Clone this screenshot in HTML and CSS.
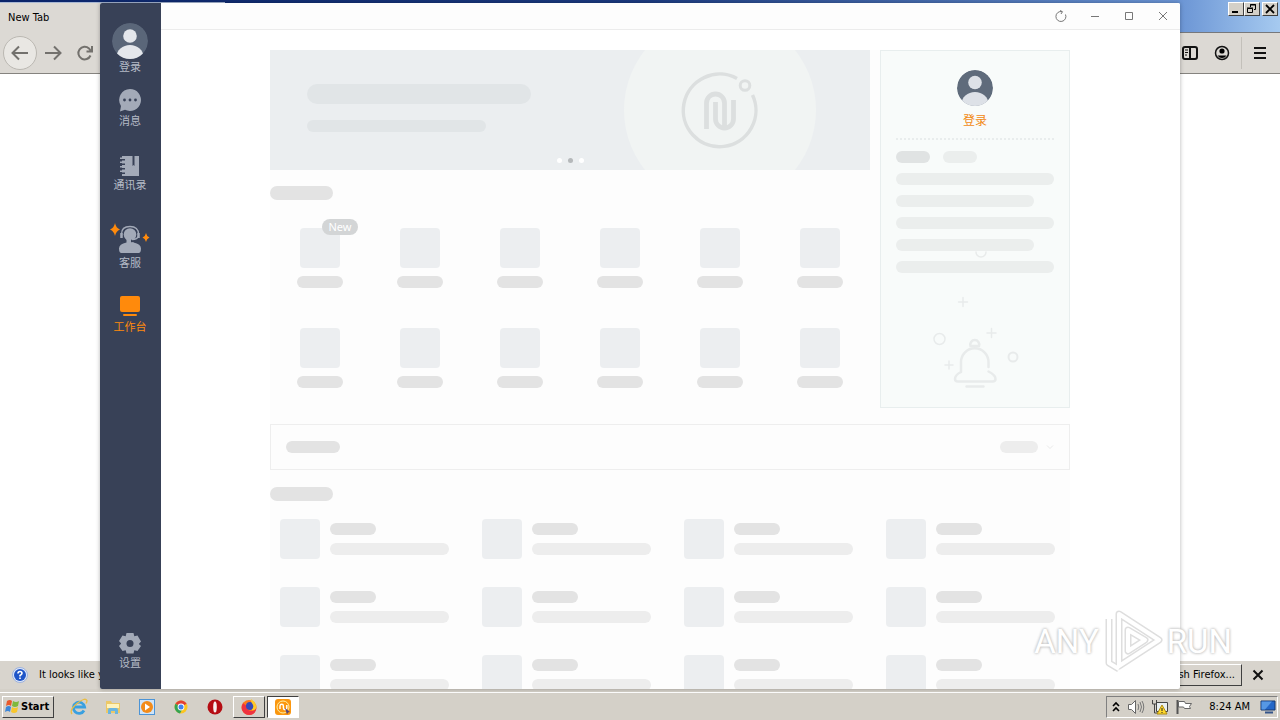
FILE: index.html
```html
<!DOCTYPE html>
<html lang="zh-CN">
    <head>
        <meta charset="UTF-8">
        <meta name="viewport" content="width=device-width,initial-scale=1.0">
        <title>工作台</title>
        <link rel="stylesheet" href="styles.css">
    </head>
    <body>
        <main class="desktop">
            <!-- browser in the background -->
            <section class="browser">
                <div class="browser-title">
                    <div class="tab">New Tab</div>
                    <div class="win-buttons">
                        <button class="win-btn" aria-label="Minimize"><svg width="12" height="10" viewBox="0 0 12 10"><path d="M2 8h6" stroke="#000" stroke-width="2"/></svg></button>
                        <button class="win-btn" aria-label="Restore"><svg width="12" height="10" viewBox="0 0 12 10"><path d="M4.500 3V.5h5v5H8M4 1h6M1.500 4.500h5v4h-5zM1 4h6" fill="none" stroke="#000"/></svg></button>
                        <button class="win-btn win-close" aria-label="Close"><svg width="12" height="10" viewBox="0 0 12 10"><path d="M2 1l8 8M10 1l-8 8" stroke="#000" stroke-width="1.800"/></svg></button>
                    </div>
                </div>
                <div class="toolbar">
                    <button class="tool back" aria-label="Back"><svg width="18" height="18" viewBox="0 0 18 18"><path d="M17 9H2M8 2.500L1.500 9 8 15.500"/></svg></button>
                    <button class="tool" aria-label="Forward"><svg width="18" height="18" viewBox="0 0 18 18"><path d="M1 9h15M10 2.500L16.500 9 10 15.500"/></svg></button>
                    <button class="tool" aria-label="Reload"><svg width="18" height="18" viewBox="0 0 18 18"><path d="M14.500 11.500A6.300 6.300 0 1 1 13 4.500l2 2.500M16 2v5.500h-5.500"/></svg></button>
                    <span class="spacer"></span>
                    <button class="tool dark" aria-label="Sidebar"><svg width="18" height="16" viewBox="0 0 18 16"><rect x="2" y="2" width="14" height="12" rx="2"/><path d="M9 2v12"/><path d="M4 5h3M4 7.500h3M4 10h2" stroke-width="1"/></svg></button>
                    <button class="tool dark" aria-label="Account"><svg width="16" height="16" viewBox="0 0 16 16"><circle cx="8" cy="8" r="6.500" stroke-width="1.500"/><circle cx="8" cy="6" r="2.600" fill="#000" stroke="none"/><path d="M3.500 10.500h9Q11 13 8 13t-4.500-2.500z" fill="#000" stroke="none"/></svg></button>
                    <button class="tool dark menu" aria-label="Menu"><svg width="14" height="14" viewBox="0 0 14 14"><path d="M1 2h12M1 7h12M1 12h12"/></svg></button>
                </div>
                <div class="page"></div>
                <div class="notice">
                    <svg width="16" height="16" viewBox="0 0 16 16"><circle cx="8" cy="8" r="7.500" fill="#dfe8fa" stroke="#9eb2dc"/><circle cx="8" cy="8" r="6" fill="#1f55c8"/><path d="M6 6.500Q6 4.500 8 4.500t2 1.800Q10 7.300 8 8.500v1M8 10.500v1.500" stroke="#fff" stroke-width="1.600" fill="none"/></svg>
                    <span>It looks like y</span>
                    <span class="spacer"></span>
                    <button class="refresh">Refresh Firefox...</button>
                    <button class="tool dark" aria-label="Dismiss"><svg width="12" height="12" viewBox="0 0 12 12"><path d="M1.500 1.500l9 9M10.500 1.500l-9 9"/></svg></button>
                </div>
            </section>

            <!-- app window -->
            <section class="app">
                <nav class="sidebar">
                    <button class="nav-item user">
                        <svg width="36" height="36" viewBox="0 0 36 36"><defs><clipPath id="round"><circle cx="18" cy="18" r="18"/></clipPath></defs><g clip-path="url(#round)"><circle cx="18" cy="18" r="18" fill="#5a6679"/><circle cx="18" cy="13" r="6.800" fill="#e4e7ec"/><ellipse cx="18" cy="34" rx="13.500" ry="12" fill="#e4e7ec"/></g></svg>
                        登录
                    </button>
                    <button class="nav-item">
                        <svg width="24" height="24" viewBox="0 0 24 24"><path d="M12 0a11 11 0 1 1-5 20.800L2 22.500l1-5.500A11 11 0 0 1 12 0z" fill="#a3aab8"/><g fill="#384157"><circle cx="6.500" cy="11" r="1.400"/><circle cx="12" cy="11" r="1.400"/><circle cx="17.500" cy="11" r="1.400"/></g></svg>
                        消息
                    </button>
                    <button class="nav-item">
                        <svg width="24" height="24" viewBox="0 0 24 24"><path d="M4 3h17v20H4z" fill="#a3aab8"/><path d="M14.500 3h2v10l-1-1-1 1zM3 6h4v1.500H3zM3 10.500h4V12H3zM3 15h4v1.500H3zM3 19.500h4V21H3z" fill="#384157"/><path d="M2 4.500h3V6H2zM2 8.500h3V10H2zM2 13h3v1.500H2zM2 17.500h3V19H2z" fill="#a3aab8"/></svg>
                        通讯录
                    </button>
                    <button class="nav-item">
                        <svg width="40" height="38" viewBox="0 0 40 38"><circle cx="20" cy="17.500" r="6.300" fill="#a3aab8"/><path d="M16.500 22h7v3.500q7.500 1.500 7.500 6 0 4.500-2.500 4.500h-17Q9 36 9 31.500q0-4.500 7.500-6z" fill="#a3aab8"/><path d="M28.500 21q-2 3-7.500 3" fill="none" stroke="#384157" stroke-width="2.500"/><path d="M11.500 19v-2q0-7.500 8.500-7.500t8.500 7.500v2q-1 3.500-6.500 3.500" fill="none" stroke="#a3aab8" stroke-width="1.300"/><path d="M11.500 16v5M28.500 16v5" stroke="#a3aab8" stroke-width="2.500"/><path d="M5 6q1 5 5 6.500Q6 14 5 19 4 14 0 12.500 4 11 5 6zM36 16q.6 3.500 3.500 4.500-2.900 1-3.500 4.500-.6-3.500-3.500-4.500 2.900-1 3.500-4.500z" fill="#ff8a0c"/></svg>
                        客服
                    </button>
                    <button class="nav-item active">
                        <svg width="24" height="24" viewBox="0 0 24 24"><rect x="2" y="1" width="20" height="16" rx="2" fill="#ff8a0c"/><rect x="5" y="19" width="14" height="2" rx="1" fill="#ff8a0c"/></svg>
                        工作台
                    </button>
                    <button class="nav-item settings">
                        <svg width="24" height="24" viewBox="0 0 24 24"><path d="M8.500 2h7l.8 3.200 3.200-.8L23 10.500 20.800 13 23 15l-3.500 5-3.200-.8-.8 3.300h-7l-.8-3.300-3.200.8L1 15l2.200-2.500L1 10l3.500-5.600 3.200.8z" fill="#a3aab8"/><circle cx="12" cy="12.500" r="3.500" fill="#384157"/></svg>
                        设置
                    </button>
                </nav>

                <div class="main">
                    <header class="titlebar">
                        <button aria-label="刷新"><svg width="12" height="12" viewBox="0 0 12 12"><path d="M10.500 4.500A5 5 0 1 1 7 1.600M5 .5l2.500 1.200L6 4"/></svg></button>
                        <button aria-label="最小化"><svg width="12" height="12" viewBox="0 0 12 12"><path d="M2 6.500h8"/></svg></button>
                        <button aria-label="最大化"><svg width="12" height="12" viewBox="0 0 12 12"><path d="M2.500 2.500h7v7h-7z"/></svg></button>
                        <button aria-label="关闭"><svg width="12" height="12" viewBox="0 0 12 12"><path d="M2 2l8 8M10 2l-8 8"/></svg></button>
                    </header>

                    <div class="content">
                        <div class="column">
                            <div class="top">
                                <div class="left">
                                    <div class="banner">
                                        <svg class="banner-art" width="192" height="120" viewBox="0 0 192 120">
                                            <circle cx="96" cy="60" r="96" fill="#f1f4f3"/>
                                            <g fill="none" stroke="#dcdfdf">
                                                <path d="M113 28.500A36.300 36.300 0 1 0 128.500 45" stroke-width="3.500"/>
                                                <circle cx="121" cy="35.500" r="4.800" stroke-width="3"/>
                                                <path d="M82.500 80V54a9 9 0 0 1 18 0v26M91.500 53v17a9 9 0 0 0 18 0V51" stroke-width="4.800" transform="translate(0 -1)"/>
                                            </g>
                                        </svg>
                                        <div class="bar banner-big"></div>
                                        <div class="bar banner-small"></div>
                                        <div class="dots"><i></i><i class="on"></i><i></i></div>
                                    </div>
                                    <div class="bar heading"></div>
                                    <div class="apps">
                                        <div class="app-cell"><span class="badge">New</span><div class="tile"></div><div class="bar name"></div></div>
                                        <div class="app-cell"><div class="tile"></div><div class="bar name"></div></div>
                                        <div class="app-cell"><div class="tile"></div><div class="bar name"></div></div>
                                        <div class="app-cell"><div class="tile"></div><div class="bar name"></div></div>
                                        <div class="app-cell"><div class="tile"></div><div class="bar name"></div></div>
                                        <div class="app-cell"><div class="tile"></div><div class="bar name"></div></div>
                                        <div class="app-cell"><div class="tile"></div><div class="bar name"></div></div>
                                        <div class="app-cell"><div class="tile"></div><div class="bar name"></div></div>
                                        <div class="app-cell"><div class="tile"></div><div class="bar name"></div></div>
                                        <div class="app-cell"><div class="tile"></div><div class="bar name"></div></div>
                                        <div class="app-cell"><div class="tile"></div><div class="bar name"></div></div>
                                        <div class="app-cell"><div class="tile"></div><div class="bar name"></div></div>
                                    </div>
                                </div>

                                <aside class="panel">
                                    <svg class="avatar" width="36" height="36" viewBox="0 0 36 36"><g clip-path="url(#round)"><circle cx="18" cy="18" r="18" fill="#5f6b7b"/><circle cx="18" cy="12.500" r="6.800" fill="#dde1e7"/><ellipse cx="18" cy="34" rx="13.500" ry="12" fill="#dde1e7"/></g></svg>
                                    <a class="login" href="#">登录</a>
                                    <div class="rule"></div>
                                    <div class="pills"><div class="bar pill"></div><div class="bar pill light"></div></div>
                                    <div class="lines">
                                        <div class="bar light"></div>
                                        <div class="bar light short"></div>
                                        <div class="bar light"></div>
                                        <div class="bar light short"></div>
                                        <div class="bar light"></div>
                                    </div>
                                    <svg class="bell" width="90" height="150" viewBox="0 0 90 150">
                                        <g fill="none" stroke="#e8ebeb" stroke-width="2.500" stroke-linecap="round">
                                            <path d="M40.500 100a4.500 4.500 0 1 1 8.500 0z"/>
                                            <path d="M31 126v-10a13.500 13.500 0 0 1 27.500 0v5M31 126q-6 3-6 7 0 2.500 3 2.500h34.500q3 0 3-2.500 0-4-7-7.500M36.500 140.500h17"/>
                                            <g stroke-width="1.500">
                                                <circle cx="9.500" cy="93" r="5.500"/>
                                                <circle cx="83" cy="111" r="4.500" stroke-width="2"/>
                                                <path d="M46 6a5 5 0 0 0 10 0"/>
                                                <path d="M28.500 56h9M33 51.500v9M57 87h9M61.500 82.500v9M15 119h8M19 115v8"/>
                                            </g>
                                        </g>
                                    </svg>
                                </aside>
                            </div>

                            <div class="filter">
                                <div class="bar filter-name"></div>
                                <div class="filter-more">
                                    <div class="bar light filter-pill"></div>
                                    <svg width="8" height="6" viewBox="0 0 8 6"><path d="M1 1.500l3 3 3-3" fill="none" stroke="#eaeaea"/></svg>
                                </div>
                            </div>

                            <div class="bar heading"></div>
                            <div class="cards">
                                <div class="card"><div class="tile"></div><div class="card-text"><div class="bar name"></div><div class="bar light desc"></div></div></div>
                                <div class="card"><div class="tile"></div><div class="card-text"><div class="bar name"></div><div class="bar light desc"></div></div></div>
                                <div class="card"><div class="tile"></div><div class="card-text"><div class="bar name"></div><div class="bar light desc"></div></div></div>
                                <div class="card"><div class="tile"></div><div class="card-text"><div class="bar name"></div><div class="bar light desc"></div></div></div>
                                <div class="card"><div class="tile"></div><div class="card-text"><div class="bar name"></div><div class="bar light desc"></div></div></div>
                                <div class="card"><div class="tile"></div><div class="card-text"><div class="bar name"></div><div class="bar light desc"></div></div></div>
                                <div class="card"><div class="tile"></div><div class="card-text"><div class="bar name"></div><div class="bar light desc"></div></div></div>
                                <div class="card"><div class="tile"></div><div class="card-text"><div class="bar name"></div><div class="bar light desc"></div></div></div>
                                <div class="card"><div class="tile"></div><div class="card-text"><div class="bar name"></div><div class="bar light desc"></div></div></div>
                                <div class="card"><div class="tile"></div><div class="card-text"><div class="bar name"></div><div class="bar light desc"></div></div></div>
                                <div class="card"><div class="tile"></div><div class="card-text"><div class="bar name"></div><div class="bar light desc"></div></div></div>
                                <div class="card"><div class="tile"></div><div class="card-text"><div class="bar name"></div><div class="bar light desc"></div></div></div>
                            </div>
                        </div>
                    </div>
                </div>
            </section>

            <div class="watermark">
                <span>ANY</span>
                <svg width="60" height="64" viewBox="0 0 60 64"><g fill="none" stroke-linejoin="round"><g stroke="#dedede" stroke-width="7"><path d="M16 5l40 26-40 26z"/><path d="M25 21l17 10-17 11zM6 10v44l10 6"/></g><g stroke="#fff" stroke-width="4"><path d="M16 5l40 26-40 26z"/><path d="M25 21l17 10-17 11zM6 10v44l10 6"/></g></g></svg>
                <span>RUN</span>
            </div>
        </main>

        <footer class="taskbar">
            <button class="start">
                <svg width="16" height="16" viewBox="0 0 16 16"><path d="M3 2q3-2 5 0L7 7Q5 5 2 7z" fill="#e8592b"/><path d="M9 2q3 2 6 0l-1 5q-3 2-6 0z" fill="#7fb93c"/><path d="M2 8q3-2 5 0l-1 5q-2-2-5 0z" fill="#3c86d8"/><path d="M8 8q3 2 6 0l-1 5q-3 2-6 0z" fill="#f8c62c"/></svg>
                Start
            </button>
            <div class="quick">
                <svg width="18" height="18" viewBox="0 0 18 18"><path d="M14 12.500A5.600 5.600 0 1 1 14.600 9H5" fill="none" stroke="#39a0e0" stroke-width="2.800"/><path d="M2 16Q-1 12 7 5.500T17 2.500q0 1.500-1 3" fill="none" stroke="#e9bd45" stroke-width="1.300"/></svg>
                <svg width="18" height="18" viewBox="0 0 18 18"><path d="M2 3h5l1 2h8v10H2z" fill="#ecc867"/><path d="M3 6h12v4H3z" fill="#fff3bb"/><path d="M4 16v-4q0-2 2-2h6q2 0 2 2v4h-3v-3H7v3z" fill="#6bb5df"/></svg>
                <svg width="18" height="18" viewBox="0 0 18 18"><rect x="1.500" y="1.500" width="15" height="15" fill="#cfe4f8" stroke="#4c94d6"/><circle cx="9" cy="9" r="6" fill="#f38b19"/><path d="M7 5.500l5 3.500-5 3.500z" fill="#fff"/></svg>
                <svg width="18" height="18" viewBox="0 0 18 18"><circle cx="9" cy="9" r="6.500" fill="#fbc520"/><path d="M9 9L3.400 5.800A6.500 6.500 0 0 1 14.600 5.800z" fill="#e23f33"/><path d="M3.400 5.800A6.500 6.500 0 0 0 8 15.400L10.500 11 9 9z" fill="#35a352"/><circle cx="9" cy="9" r="3.400" fill="#fff"/><circle cx="9" cy="9" r="2.500" fill="#4182ee"/></svg>
                <svg width="18" height="18" viewBox="0 0 18 18"><circle cx="9" cy="9" r="7.500" fill="#b50d13"/><ellipse cx="9" cy="9" rx="1.800" ry="5.500" fill="#f7f0ee"/></svg>
            </div>
            <button class="task" aria-label="Firefox"><svg width="18" height="18" viewBox="0 0 18 18"><circle cx="9" cy="9.500" r="7.500" fill="#ff7a1a"/><path d="M3 5Q1 9 2 12q2 5 8 5 6-1 6.500-7.500Q15 13 11 13q-5-1-4-5-2-1-4-3z" fill="#ef3340"/><circle cx="10" cy="8" r="4" fill="#3649b8"/><path d="M11 1q5 3 5.500 8-1 4-5 3 3-3 1-6-2-2-1.500-5z" fill="#ffc928"/></svg></button>
            <button class="task pressed" aria-label="工作台"><svg width="18" height="18" viewBox="0 0 18 18"><rect x="1" y="1" width="16" height="16" rx="3" fill="#fb970f"/><circle cx="9" cy="9" r="6" fill="none" stroke="#fff0a3"/><path d="M6 11V8a1.700 1.700 0 0 1 3.400 0v2a1.700 1.700 0 0 0 3.400 0V7" fill="none" stroke="#fff" stroke-width="1.400"/><path d="M11 10l5 4-2 .5-1 2z" fill="#547"/></svg></button>
            <span class="spacer"></span>
            <div class="tray">
                <svg width="10" height="12" viewBox="0 0 10 12"><path d="M2 5l3-3 3 3M2 10l3-3 3 3" fill="none" stroke="#000" stroke-width="1.600"/></svg>
                <svg width="18" height="16" viewBox="0 0 18 16"><path d="M1.500 5.500h3l4-4v13l-4-4h-3z" fill="#fff" stroke="#666"/><path d="M11 5q1.500 3 0 6M13 3q3 5 0 10M15 2q3.500 6 0 12" fill="none" stroke="#777"/></svg>
                <svg width="18" height="16" viewBox="0 0 18 16"><path d="M5.500 3.500h11v9h-11z" fill="#e8eef0" stroke="#444"/><path d="M1.500 1v4h4V1M3.500 5v9h5" fill="none" stroke="#444"/><path d="M11 6l5 9H6z" fill="#ffd82b" stroke="#ac8a13"/><path d="M11 9v3M11 13v1" stroke="#222"/></svg>
                <svg width="18" height="16" viewBox="0 0 18 16"><path d="M2.500 1v14" stroke="#555" stroke-width="2"/><path d="M3.500 2.500h6l1 2h6l-2 3 1 2h-6l-1-1.500h-5z" fill="#fff" stroke="#666"/></svg>
                <time>8:24 AM</time>
                <svg width="16" height="14" viewBox="0 0 16 14"><path d="M1 1h14v9H1z" fill="#2467c8" stroke="#16386f"/><path d="M1.500 1.500H12L5 9.500H1.500z" fill="#5698e5"/><path d="M5 12.500h8" stroke="#35558a" stroke-width="2"/></svg>
            </div>
        </footer>
    </body>
</html>
```
FILE: styles.css
```css
*{
    margin: 0;
    padding: 0;
    box-sizing: border-box;
}
body{
    height: 100vh;
    display: flex;
    flex-direction: column;
    overflow: hidden;
    background-color: #d4d0c8;
    font-family: "DejaVu Sans Condensed", "Noto Sans CJK SC", sans-serif;
    font-size: 11px;
    color: #000;
}
button{
    border: none;
    background: none;
    font: inherit;
    color: inherit;
}
svg{
    display: block;
    flex-shrink: 0;
}
.spacer{
    flex: 1;
}
.desktop{
    position: relative;
    flex: 1;
    min-height: 0;
}

/* browser */
.browser{
    height: 100%;
    display: flex;
    flex-direction: column;
    padding-bottom: 3px;
}
.browser-title{
    height: 33px;
    display: flex;
    justify-content: space-between;
    align-items: flex-start;
    padding-top: 2px;
    padding-right: 2px;
    border-bottom: 1px solid #76787c;
    background: linear-gradient(to right, #0a246a, #1c3b80 50%, #6a94d4 92%, #a6caf0);
}
.tab{
    width: 225px;
    height: 31px;
    padding-left: 8px;
    border-top: 1px solid #a9b8d4;
    background-color: #dcd9d4;
    line-height: 30px;
}
.win-buttons{
    display: flex;
}
.win-btn{
    width: 16px;
    height: 14px;
    display: flex;
    justify-content: center;
    align-items: center;
    background-color: #d4d0c8;
    border: 1px solid;
    border-color: #fff #404040 #404040 #fff;
}
.win-close{
    margin-left: 2px;
}
.toolbar{
    height: 41px;
    display: flex;
    align-items: center;
    padding: 0 3px;
    border-bottom: 1px solid #85837f;
    background-color: #dcd9d4;
}
.tool{
    width: 32px;
    height: 32px;
    display: flex;
    justify-content: center;
    align-items: center;
    fill: none;
    stroke: #73716d;
    stroke-width: 2;
}
.back{
    width: 34px;
    height: 34px;
    border: 1px solid #bbb8b2;
    border-radius: 50%;
    background-color: #e9e7e3;
}
.dark{
    stroke: #111;
}
.menu{
    width: 36px;
    margin-left: 3px;
    border-left: 1px solid #c3c0ba;
}
.page{
    flex: 1;
    background-color: #fff;
}
.notice{
    height: 28px;
    display: flex;
    align-items: center;
    padding: 0 6px 0 12px;
    background-color: #d8d4cd;
    line-height: 28px;
}
.notice span:first-of-type{
    margin-left: 11px;
}
.notice .spacer{
    height: 28px;
}
.refresh{
    height: 22px;
    padding: 0 6px;
    border: 1px solid;
    border-color: #fff #404040 #404040 #fff;
    line-height: 20px;
}

/* app window */
.app{
    position: absolute;
    top: 3px;
    right: 100px;
    bottom: 3px;
    left: 100px;
    display: flex;
    border-radius: 2px;
    overflow: hidden;
    background-color: #fff;
    box-shadow: 0 0 4px rgba(0, 0, 0, 0.3);
}
.sidebar{
    width: 61px;
    display: flex;
    flex-direction: column;
    align-items: center;
    gap: 22px;
    padding: 20px 1px 16px 0;
    background-color: #384157;
}
.nav-item{
    display: flex;
    flex-direction: column;
    align-items: center;
    color: #b4bac6;
    font-size: 11px;
    line-height: 18px;
    white-space: nowrap;
}
.user{
    margin-bottom: -10px;
}
.active{
    color: #ff8a0c;
}
.settings{
    margin-top: auto;
}
.main{
    flex: 1;
    min-width: 0;
    display: flex;
    flex-direction: column;
}
.titlebar{
    height: 27px;
    display: flex;
    justify-content: flex-end;
    border-bottom: 1px solid #ececec;
    background-color: #fdfdfd;
}
.titlebar button{
    width: 34px;
    display: flex;
    justify-content: center;
    align-items: center;
    fill: none;
    stroke: #777;
}
.content{
    flex: 1;
    min-height: 0;
    overflow: hidden;
    padding: 20px 1px 0 0;
}
.column{
    max-width: 800px;
    margin: 0 auto;
    background-color: #fdfdfd;
}
.bar{
    height: 12px;
    border-radius: 7px;
    background-color: #e3e3e3;
}
.light{
    background-color: #ededed;
}
.heading{
    width: 63px;
    height: 14px;
    margin-top: 16px;
}
.tile{
    width: 40px;
    height: 40px;
    border-radius: 4px;
    background-color: #eceef0;
}
.name{
    width: 46px;
}
.top{
    display: flex;
    gap: 10px;
}
.left{
    flex: 1;
}
.banner{
    position: relative;
    height: 120px;
    padding: 34px 37px;
    background-color: #ebeef0;
}
.banner-art{
    position: absolute;
    top: 0;
    right: 54px;
}
.banner .bar{
    background-color: #e1e5e7;
}
.banner .banner-big{
    width: 224px;
    height: 20px;
    border-radius: 10px;
}
.banner-small{
    width: 179px;
    margin-top: 16px;
}
.dots{
    position: absolute;
    right: 0;
    bottom: 7px;
    left: 0;
    display: flex;
    justify-content: center;
    gap: 6px;
}
.dots i{
    width: 5px;
    height: 5px;
    border-radius: 50%;
    background-color: #fff;
}
.dots .on{
    background-color: #b5b8ba;
}
.apps{
    display: grid;
    grid-template-columns: repeat(6, 1fr);
    row-gap: 40px;
    padding: 28px 0 20px;
}
.app-cell{
    position: relative;
    display: flex;
    flex-direction: column;
    align-items: center;
    gap: 8px;
}
.badge{
    position: absolute;
    top: -9px;
    left: 52px;
    width: 36px;
    height: 16px;
    border-radius: 8px;
    background-color: #d3d5d6;
    color: #fff;
    font-family: "Noto Sans", sans-serif;
    line-height: 16px;
    text-align: center;
}
.panel{
    position: relative;
    width: 190px;
    padding: 19px 15px;
    border: 1px solid #e8eeee;
    background-color: #f8fbfa;
}
.avatar{
    margin: 0 auto;
}
.login{
    display: block;
    margin-top: 6px;
    color: #f28a14;
    font-size: 12px;
    line-height: 18px;
    text-align: center;
    text-decoration: none;
}
.rule{
    margin-top: 8px;
    border-top: 2px dotted #e9eded;
}
.pills{
    display: flex;
    gap: 13px;
    margin-top: 11px;
}
.pill{
    width: 34px;
    background-color: #e0e3e3;
}
.panel .light{
    background-color: #ebeeed;
}
.lines{
    display: flex;
    flex-direction: column;
    gap: 10px;
    margin-top: 10px;
}
.short{
    margin-right: 20px;
}
.bell{
    position: absolute;
    bottom: 11px;
    left: 49px;
}
.filter{
    height: 46px;
    display: flex;
    justify-content: space-between;
    align-items: center;
    margin-top: 16px;
    margin-bottom: 17px;
    padding: 0 15px;
    border: 1px solid #eee;
}
.filter-name{
    width: 54px;
}
.filter-more{
    display: flex;
    align-items: center;
    gap: 8px;
}
.filter-pill{
    width: 38px;
}
.cards{
    display: grid;
    grid-template-columns: repeat(4, 1fr);
    gap: 28px;
    padding: 18px 10px;
}
.card{
    display: flex;
    align-items: center;
    gap: 10px;
}
.card-text{
    display: flex;
    flex-direction: column;
    gap: 8px;
}
.desc{
    width: 119px;
}
.watermark{
    position: absolute;
    right: 48px;
    bottom: 19px;
    display: flex;
    align-items: center;
    gap: 4px;
    color: #fff;
    font-family: Roboto, sans-serif;
    font-size: 33px;
    text-shadow: 0 0 3px #bbb, 0 0 3px #ccc;
}

/* taskbar */
.taskbar{
    height: 28px;
    display: flex;
    align-items: center;
    padding: 2px 2px 2px;
    border-top: 1px solid #fff;
    background-color: #d4d0c8;
}
.start{
    width: 52px;
    height: 22px;
    display: flex;
    align-items: center;
    gap: 1px;
    padding-left: 1px;
    border: 1px solid;
    border-color: #fff #404040 #404040 #fff;
    font-weight: bold;
}
.quick{
    display: flex;
    gap: 16px;
    margin: 0 9px 0 16px;
}
.task{
    width: 32px;
    height: 22px;
    display: flex;
    justify-content: center;
    align-items: center;
    margin-right: 2px;
    border: 1px solid;
    border-color: #fff #404040 #404040 #fff;
}
.pressed{
    background-color: #fff;
    border-color: #404040 #fff #fff #404040;
}
.tray{
    height: 22px;
    display: flex;
    align-items: center;
    gap: 6px;
    padding: 0 1px 0 4px;
    border: 1px solid;
    border-color: #808080 #fff #fff #808080;
}
.tray time{
    margin: 0 4px 0 10px;
}
```
